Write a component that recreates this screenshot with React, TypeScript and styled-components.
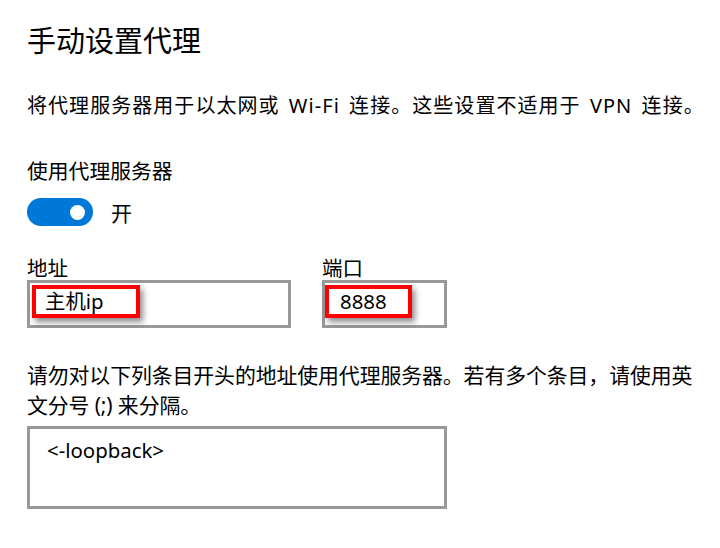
import React from "react";
import styled, { createGlobalStyle } from "styled-components";

const Global = createGlobalStyle`
  html, body { margin: 0; padding: 0; background: #ffffff; }
  body {
    font-family: "Noto Sans", "Noto Sans CJK SC", sans-serif;
    color: #000000;
  }
`;

const Page = styled.div`
  width: 720px;
  height: 548px;
  box-sizing: border-box;
  padding: 23px 0 0 27px;
  display: flex;
  flex-direction: column;
  align-items: flex-start;
  overflow: hidden;
`;

const Title = styled.h1`
  margin: 0;
  font-size: 29px;
  line-height: 36px;
  font-weight: 400;
`;

const Text = styled.p<{ $size?: number; $top: number; $ls?: number; $ws?: number }>`
  margin: ${(p) => p.$top}px 0 0 0;
  font-size: ${(p) => p.$size ?? 20}px;
  line-height: 30px;
  letter-spacing: ${(p) => p.$ls ?? 0}px;
  word-spacing: ${(p) => p.$ws ?? 0}px;
  font-weight: 400;
  white-space: nowrap;
`;

const Paragraph = styled.p`
  margin: 32px 0 0 0;
  width: 676px;
  font-size: 20.9px;
  line-height: 30px;
  letter-spacing: -0.1px;
`;

const ToggleRow = styled.div`
  margin-top: 11px;
  height: 30px;
  display: flex;
  align-items: center;
  gap: 18px;
  font-size: 21px;
`;

const Toggle = styled.div`
  width: 66px;
  height: 28px;
  border-radius: 14px;
  background: #0078d7;
  display: flex;
  align-items: center;
  justify-content: flex-end;
  padding-right: 8px;
  box-sizing: border-box;
`;

const Knob = styled.div`
  width: 15px;
  height: 15px;
  border-radius: 50%;
  background: #ffffff;
`;

const Fields = styled.div`
  margin-top: 29px;
  display: flex;
  gap: 31px;
`;

const Field = styled.div<{ $w: number }>`
  width: ${(p) => p.$w}px;
  display: flex;
  flex-direction: column;
`;

const Label = styled.div`
  font-size: 20.5px;
  line-height: 24px;
`;

const InputBox = styled.div<{ $padLeft: number }>`
  height: 48px;
  box-sizing: border-box;
  border: 3px solid #999999;
  background: #ffffff;
  display: flex;
  align-items: flex-start;
  padding: 2px 0 0 ${(p) => p.$padLeft}px;
`;

const Highlight = styled.span<{ $w: number; $pad: number }>`
  width: ${(p) => p.$w}px;
  height: 33px;
  box-sizing: border-box;
  border: 4px solid #ff0000;
  box-shadow: 3px 4px 6px rgba(0, 0, 0, 0.45);
  padding-left: ${(p) => p.$pad}px;
  font-size: 20.4px;
  line-height: 25px;
  display: flex;
  align-items: center;
`;

const BypassBox = styled.div`
  margin-top: 6px;
  width: 420px;
  height: 83px;
  box-sizing: border-box;
  border: 3px solid #999999;
  padding: 8px 0 0 17px;
  font-size: 20.4px;
  line-height: 26px;
`;

export default function App() {
  return (
    <>
      <Global />
      <Page>
        <Title>手动设置代理</Title>
        <Text $size={20} $top={32} $ls={1.05} $ws={3}>
          将代理服务器用于以太网或 Wi-Fi 连接。这些设置不适用于 VPN 连接。
        </Text>
        <Text $size={20.8} $top={35}>
          使用代理服务器
        </Text>
        <ToggleRow>
          <Toggle>
            <Knob />
          </Toggle>
          <span>开</span>
        </ToggleRow>
        <Fields>
          <Field $w={264}>
            <Label>地址</Label>
            <InputBox $padLeft={2}>
              <Highlight $w={108} $pad={9}>主机ip</Highlight>
            </InputBox>
          </Field>
          <Field $w={125}>
            <Label>端口</Label>
            <InputBox $padLeft={0}>
              <Highlight $w={87} $pad={11}>8888</Highlight>
            </InputBox>
          </Field>
        </Fields>
        <Paragraph>
          请勿对以下列条目开头的地址使用代理服务器。若有多个条目，请使用英文分号 (;) 来分隔。
        </Paragraph>
        <BypassBox>&lt;-loopback&gt;</BypassBox>
      </Page>
    </>
  );
}
